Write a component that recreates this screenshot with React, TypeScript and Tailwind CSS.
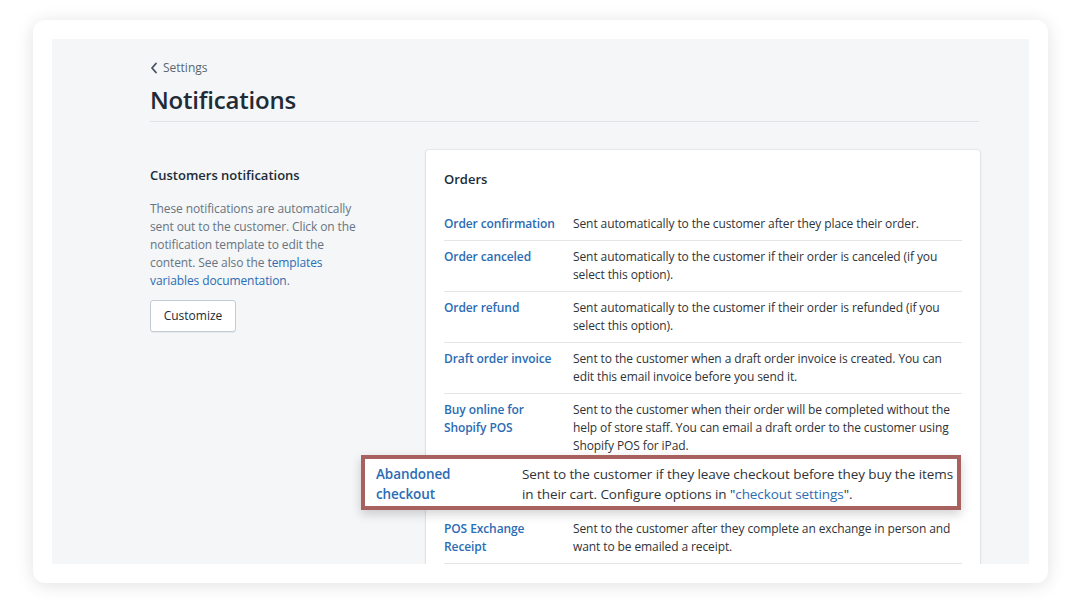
import React from "react";

const font = { fontFamily: '"Open Sans", "Noto Sans", sans-serif' };

type Row = { title: string[]; desc: React.ReactNode };

const rowsTop: Row[] = [
  { title: ["Order confirmation"], desc: "Sent automatically to the customer after they place their order." },
  { title: ["Order canceled"], desc: <>Sent automatically to the customer if their order is canceled (if you<br />select this option).</> },
  { title: ["Order refund"], desc: <>Sent automatically to the customer if their order is refunded (if you<br />select this option).</> },
  { title: ["Draft order invoice"], desc: <>Sent to the customer when a draft order invoice is created. You can<br />edit this email invoice before you send it.</> },
  { title: ["Buy online for", "Shopify POS"], desc: <>Sent to the customer when their order will be completed without the<br />help of store staff. You can email a draft order to the customer using<br />Shopify POS for iPad.</> },
];

function NotifRow({ row, border = true, extraTop = false }: { row: Row; border?: boolean; extraTop?: boolean }) {
  return (
    <div className={`flex ${extraTop ? "pt-[10px]" : "pt-[7px]"} pb-[7px] text-[12px] leading-[18px] tracking-[-0.1px] ${border ? "border-b border-[#e3e6e9]" : ""}`}>
      <div className="w-[129px] shrink-0 font-semibold text-[#2b6cb4] whitespace-nowrap">
        {row.title.map((t, i) => (
          <div key={i}>{t}</div>
        ))}
      </div>
      <div className="text-[#2f3338] whitespace-nowrap">{row.desc}</div>
    </div>
  );
}

export default function App() {
  return (
    <div className="w-[1080px] h-[614px] bg-white overflow-hidden pt-[20px] pl-[33px]" style={font}>
      <div className="w-[1015px] h-[563px] bg-white rounded-[12px] shadow-[0_2px_18px_rgba(0,0,0,0.12)] p-[19px]">
        <div className="w-[977px] h-[525px] bg-[#f4f6f8] overflow-hidden pl-[98px] pr-[48px] pt-[21px]">
          <div className="flex items-center gap-[5px] text-[12px] text-[#5b6670] h-[16px]">
            <svg width="8" height="12" viewBox="0 0 8 12" fill="none">
              <path d="M6 1.5 L2 6 L6 10.5" stroke="#454f5b" strokeWidth="1.8" strokeLinecap="round" strokeLinejoin="round" />
            </svg>
            <span>Settings</span>
          </div>
          <h1 className="mt-[10px] text-[24px] leading-[28px] font-semibold text-[#212b36] tracking-[-0.2px]">Notifications</h1>
          <div className="mt-[7px] border-b border-[#dfe3e8] w-[829px]" />

          <div className="flex mt-[28px]">
            <div className="w-[276px] shrink-0 pt-[16px]">
              <h2 className="text-[13px] leading-[18px] font-semibold text-[#212b36]">Customers notifications</h2>
              <p className="mt-[16px] text-[12px] leading-[18px] tracking-[-0.1px] text-[#687480] whitespace-nowrap">
                These notifications are automatically
                <br />
                sent out to the customer. Click on the
                <br />
                notification template to edit the
                <br />
                content. See also the <span className="text-[#2b6cb4]">templates</span>
                <br />
                <span className="text-[#2b6cb4]">variables documentation</span>.
              </p>
              <button className="mt-[10px] h-[32px] w-[86px] rounded-[3px] border border-[#c4cdd5] bg-white text-[12px] text-[#212b36] shadow-[0_1px_0_rgba(22,29,37,0.05)]">
                Customize
              </button>
            </div>

            <div className="w-[554px] bg-white rounded-[3px] shadow-[0_0_0_1px_rgba(63,63,68,0.05),0_1px_3px_rgba(63,63,68,0.15)] pl-[18px] pr-[18px] pt-[20px] pb-[40px]">
              <h3 className="text-[13px] leading-[18px] font-semibold text-[#212b36]">Orders</h3>
              <div className="mt-[20px]">
                {rowsTop.map((r, i) => (
                  <NotifRow key={i} row={r} border={i < 4} />
                ))}
                <div className="relative z-10 -mt-[7px] -ml-[83px] w-[600px] border-[4px] border-[#a7625f] bg-white shadow-[0_4px_10px_rgba(0,0,0,0.18)] flex pl-[11px] pt-[5px] pb-[2px] text-[13.5px] leading-[20px] tracking-[-0.08px]">
                  <div className="w-[146px] shrink-0 font-semibold text-[#2b6cb4]">
                    <div>Abandoned</div>
                    <div>checkout</div>
                  </div>
                  <div className="text-[#2f3338] whitespace-nowrap">
                    Sent to the customer if they leave checkout before they buy the items
                    <br />
                    in their cart. Configure options in "<span className="text-[#2b6cb4]">checkout settings</span>".
                  </div>
                </div>
                <NotifRow
                  extraTop
                  row={{
                    title: ["POS Exchange", "Receipt"],
                    desc: <>Sent to the customer after they complete an exchange in person and<br />want to be emailed a receipt.</>,
                  }}
                />
              </div>
            </div>
          </div>
        </div>
      </div>
    </div>
  );
}
